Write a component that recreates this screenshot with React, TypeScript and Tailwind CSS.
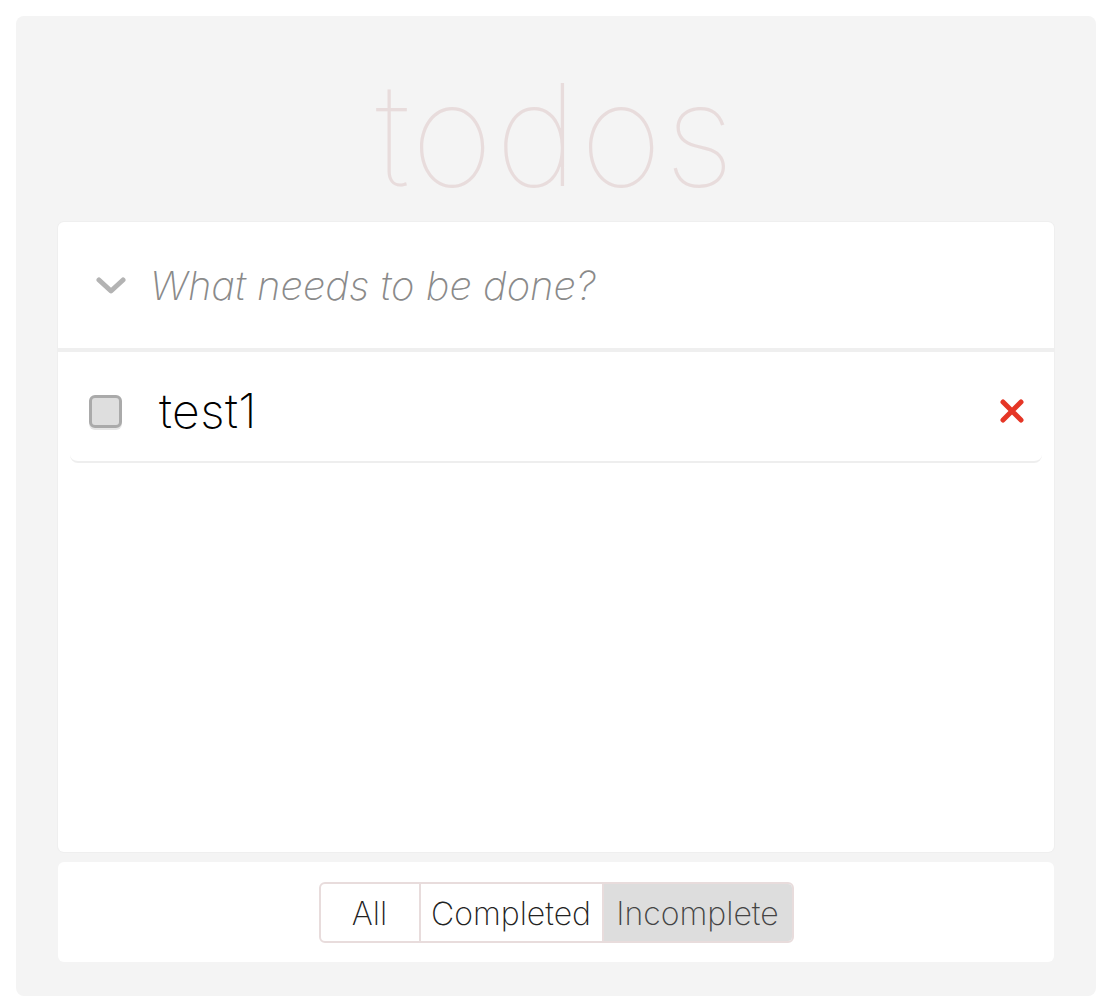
import React from "react";

const FONT = "font-['Inter','Lato','Liberation_Sans',sans-serif]";

const Chevron = () => (
  <svg width="30" height="20" viewBox="0 0 30 20" className="shrink-0">
    <path
      d="M3 4 L15 15 L27 4"
      fill="none"
      stroke="#b3b3b3"
      strokeWidth="5"
      strokeLinecap="round"
      strokeLinejoin="round"
    />
  </svg>
);

const Cross = () => (
  <svg width="24" height="24" viewBox="0 0 24 24">
    <path
      d="M3 3 L21 21 M21 3 L3 21"
      stroke="#e53626"
      strokeWidth="5"
      strokeLinecap="round"
    />
  </svg>
);

const filters = ["All", "Completed", "Incomplete"];

export default function App() {
  return (
    <div className={`min-h-screen bg-white p-4 ${FONT}`}>
      <div className="flex h-[980px] w-[1080px] flex-col items-center rounded-lg bg-[#f4f4f4] px-[42px]">
        <h1 className="mt-[38px] h-[168px] text-[142px] font-thin leading-[160px] tracking-[0.015em] text-[#e8dcdc]">
          todos
        </h1>

        <div className="flex h-[630px] w-full flex-col rounded-md bg-white shadow-[0_0_0_1px_#efefef]">
          <div className="flex h-[130px] items-center border-b-4 border-[#efefef] pl-[38px] pt-[2px]">
            <Chevron />
            <span className="ml-[24px] text-[40px] font-extralight italic text-[#8a8a8a]">
              What needs to be done?
            </span>
          </div>
          <div className="mx-3 flex h-[111px] items-center rounded-b-lg border-b-2 border-[#eeeeee] pl-[19px] pr-[18px] pt-[9px]">
            <div className="h-[33px] w-[33px] rounded-md border-[3px] border-[#aaaaaa] bg-[#dedede] shadow-[0_2px_0_#e6e6e6]" />
            <span className="ml-[37px] text-[48px] font-extralight tracking-[0.01em] text-black">
              test1
            </span>
            <div className="ml-auto">
              <Cross />
            </div>
          </div>
        </div>

        <div className="mt-[10px] flex h-[100px] w-full items-center justify-center rounded-md bg-white">
          <div className="flex h-[61px] overflow-hidden rounded-md border-2 border-[#e8dcdc]">
            {filters.map((f, i) => (
              <div
                key={f}
                className={`flex items-center justify-center pt-[3px] text-[32px] font-extralight ${
                  i === 0 ? "w-[100px] border-r-2 border-[#e8dcdc]" : ""
                } ${i === 1 ? "w-[183px] border-r-2 border-[#e8dcdc]" : ""} ${
                  i === 2 ? "w-[188px] bg-[#dddddd] text-[#444]" : "text-[#222]"
                }`}
              >
                {f}
              </div>
            ))}
          </div>
        </div>
      </div>
    </div>
  );
}
